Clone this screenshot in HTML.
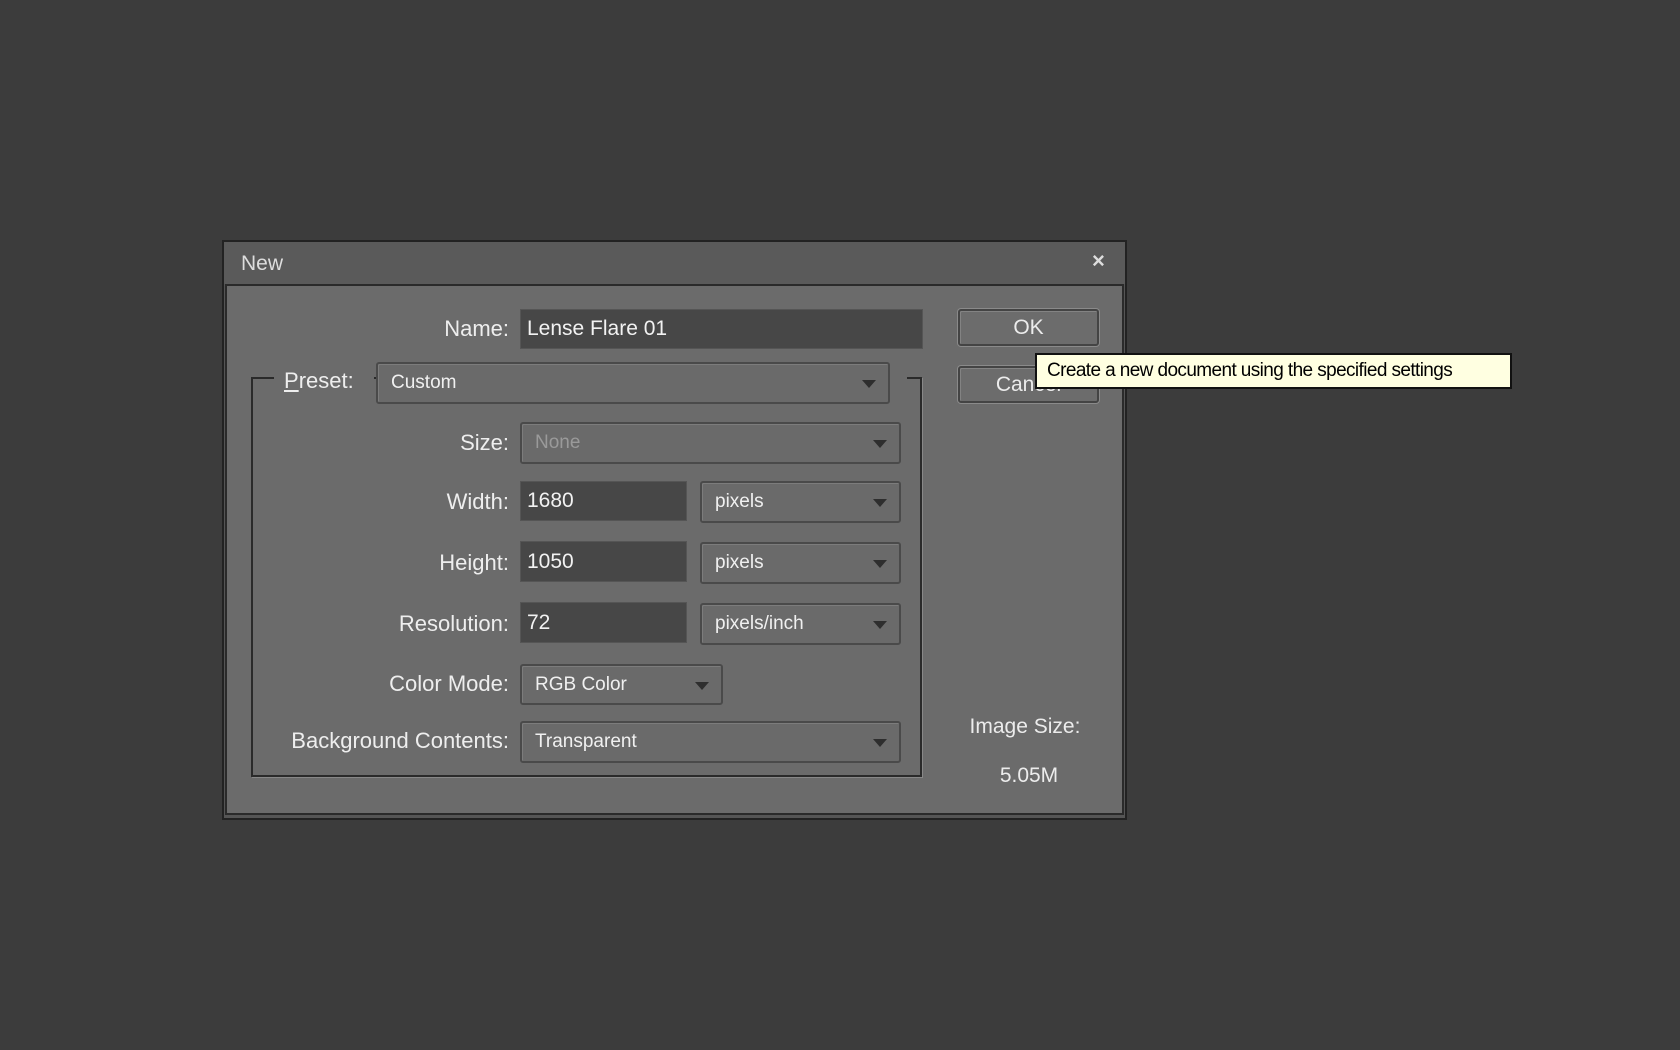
<!DOCTYPE html>
<html><head><meta charset="utf-8"><style>
*{margin:0;padding:0;box-sizing:border-box}
body{width:1680px;height:1050px;background:#3c3c3c;position:relative;overflow:hidden;font-family:"Liberation Sans",sans-serif;color:#ececec}
.a{position:absolute}
.lbl{position:absolute;font-size:22px;text-align:right;white-space:nowrap;color:#eee}
.inp{position:absolute;background:#474747;border:1px solid #555;font-size:21px;padding-left:6px;color:#f2f2f2;display:flex;align-items:center}
.dd{position:absolute;background:#6a6a6a;border:2px solid #4a4a4a;border-radius:3px;font-size:19px;padding-left:13px;display:flex;align-items:center;color:#f0f0f0;box-shadow:inset 1px 1px 0 #7c7c7c}
.dd:after{content:"";position:absolute;right:12px;top:50%;margin-top:-3px;border-left:7px solid transparent;border-right:7px solid transparent;border-top:8px solid #2e2e2e}
.btn{position:absolute;background:#6c6c6c;border:2px solid #444;border-radius:3px;font-size:21px;display:flex;align-items:center;justify-content:center;box-shadow:0 0 0 1px #8a8a8a,inset 1px 1px 0 #838383}
</style></head><body>
<div class="a" style="left:222px;top:240px;width:905px;height:580px;background:#555;border:2px solid #222"></div>
<div class="a" style="left:224px;top:242px;width:901px;height:42px;background:#5a5a5a"></div>
<div class="a" style="left:241px;top:252px;font-size:21px;color:#ddd">New</div>
<div class="a" style="left:1092px;top:248px;font-size:22px;color:#ddd;font-weight:bold">×</div>
<div class="a" style="left:225px;top:284px;width:899px;height:531px;background:#6b6b6b;border:2px solid #2a2a2a"></div>

<div class="lbl" style="right:1171px;top:316px">Name:</div>
<div class="inp" style="left:520px;top:309px;width:403px;height:40px">Lense Flare 01</div>
<div class="btn" style="left:958px;top:309px;width:141px;height:37px">OK</div>
<div class="btn" style="left:958px;top:366px;width:141px;height:37px">Cancel</div>

<div class="a" style="left:251px;top:377px;width:671px;height:400px;border:2px solid #2a2a2a;box-shadow:1px 1px 0 #888"></div>
<div class="a" style="left:274px;top:368px;width:100px;height:20px;background:#6b6b6b"></div>
<div class="a" style="left:880px;top:368px;width:27px;height:20px;background:#6b6b6b"></div>
<div class="lbl" style="left:284px;top:368px"><u>P</u>reset:</div>
<div class="dd" style="left:376px;top:362px;width:514px;height:42px">Custom</div>

<div class="lbl" style="right:1171px;top:430px">Size:</div>
<div class="dd" style="left:520px;top:422px;width:381px;height:42px;color:#9a9a9a">None</div>

<div class="lbl" style="right:1171px;top:489px">Width:</div>
<div class="inp" style="left:520px;top:481px;width:167px;height:40px">1680</div>
<div class="dd" style="left:700px;top:481px;width:201px;height:42px">pixels</div>

<div class="lbl" style="right:1171px;top:550px">Height:</div>
<div class="inp" style="left:520px;top:541px;width:167px;height:41px">1050</div>
<div class="dd" style="left:700px;top:542px;width:201px;height:42px">pixels</div>

<div class="lbl" style="right:1171px;top:611px">Resolution:</div>
<div class="inp" style="left:520px;top:602px;width:167px;height:41px">72</div>
<div class="dd" style="left:700px;top:603px;width:201px;height:42px">pixels/inch</div>

<div class="lbl" style="right:1171px;top:671px">Color Mode:</div>
<div class="dd" style="left:520px;top:664px;width:203px;height:41px">RGB Color</div>

<div class="lbl" style="right:1171px;top:728px">Background Contents:</div>
<div class="dd" style="left:520px;top:721px;width:381px;height:42px">Transparent</div>

<div class="a" style="left:925px;top:715px;width:200px;text-align:center;font-size:21px">Image Size:</div>
<div class="a" style="left:929px;top:764px;width:200px;text-align:center;font-size:21px">5.05M</div>

<div class="a" style="left:1035px;top:353px;width:477px;height:36px;background:#ffffe1;border:2px solid #111;color:#000;font-size:19px;letter-spacing:-0.6px;padding-left:10px;line-height:31px;white-space:nowrap">Create a new document using the specified settings</div>
</body></html>
